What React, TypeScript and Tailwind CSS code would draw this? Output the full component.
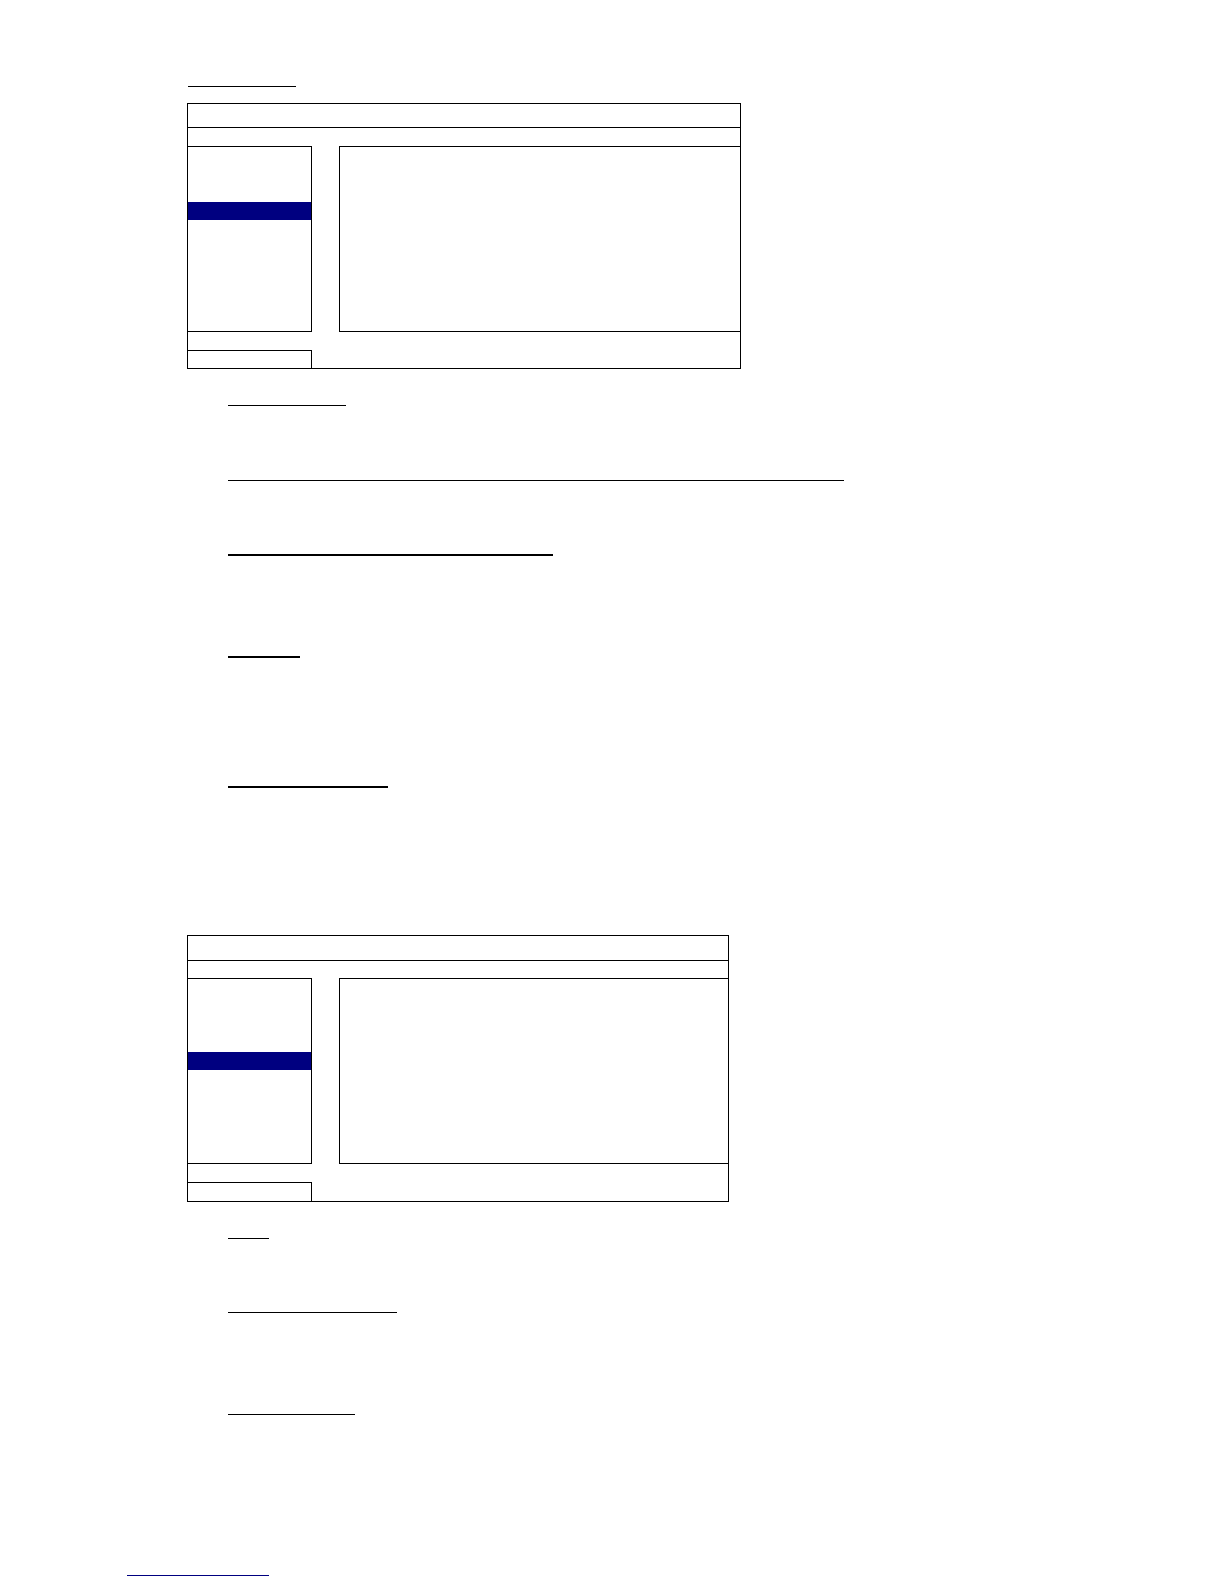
import React from 'react';

// Empty menu screen frame: title bar, sub bar, list + detail panes, status strip
interface MenuFrameProps {
  width: string;
  titleH: string;
  subH: string;
  footH: string;
  selectOffset: string;
}

const MenuFrame: React.FC<MenuFrameProps> = ({ width, titleH, subH, footH, selectOffset }) => (
  <div className={`${width} ml-[187px] border border-black flex flex-col`}>
    <div className={`${titleH} border-b border-black`} />
    <div className={subH} />
    <div className="flex h-[186px]">
      <div className="w-[124px] border-t border-r border-b border-black flex flex-col">
        <div className={selectOffset} />
        <div className="h-[18px] w-full bg-[#000080]" />
      </div>
      <div className="w-[27px]" />
      <div className="flex-1 border-t border-l border-b border-black" />
    </div>
    <div className="h-[18px]" />
    <div className={`${footH} w-[124px] border-t border-r border-black`} />
  </div>
);

const Rule: React.FC<{ className: string }> = ({ className }) => (
  <div className={`bg-black ${className}`} />
);

const App: React.FC = () => {
  return (
    <div className="w-[1224px] h-[1584px] bg-white flex flex-col overflow-hidden font-['Liberation_Sans',sans-serif]">
      {/* Section heading underline */}
      <Rule className="mt-[86px] ml-[188px] w-[108px] h-px" />

      <div className="mt-[16px]">
        <MenuFrame
          width="w-[554px]"
          titleH="h-[24px]"
          subH="h-[18px]"
          footH="h-[18px]"
          selectOffset="h-[55px]"
        />
      </div>

      {/* Item headings */}
      <Rule className="mt-[36px] ml-[228px] w-[118px] h-px" />
      <Rule className="mt-[74px] ml-[228px] w-[616px] h-px" />
      <Rule className="mt-[73px] ml-[228px] w-[325px] h-[2px]" />
      <Rule className="mt-[100px] ml-[228px] w-[72px] h-[2px]" />
      <Rule className="mt-[128px] ml-[228px] w-[160px] h-[2px]" />

      <div className="mt-[147px]">
        <MenuFrame
          width="w-[542px]"
          titleH="h-[25px]"
          subH="h-[17px]"
          footH="h-[19px]"
          selectOffset="h-[73px]"
        />
      </div>

      <Rule className="mt-[36px] ml-[228px] w-[41px] h-px" />
      <Rule className="mt-[73px] ml-[228px] w-[169px] h-px" />
      <Rule className="mt-[101px] ml-[228px] w-[127px] h-px" />

      {/* Footer link underline */}
      <div className="mt-[160px] ml-[127px] w-[142px] h-px bg-[#000080]" />
    </div>
  );
};

export default App;
